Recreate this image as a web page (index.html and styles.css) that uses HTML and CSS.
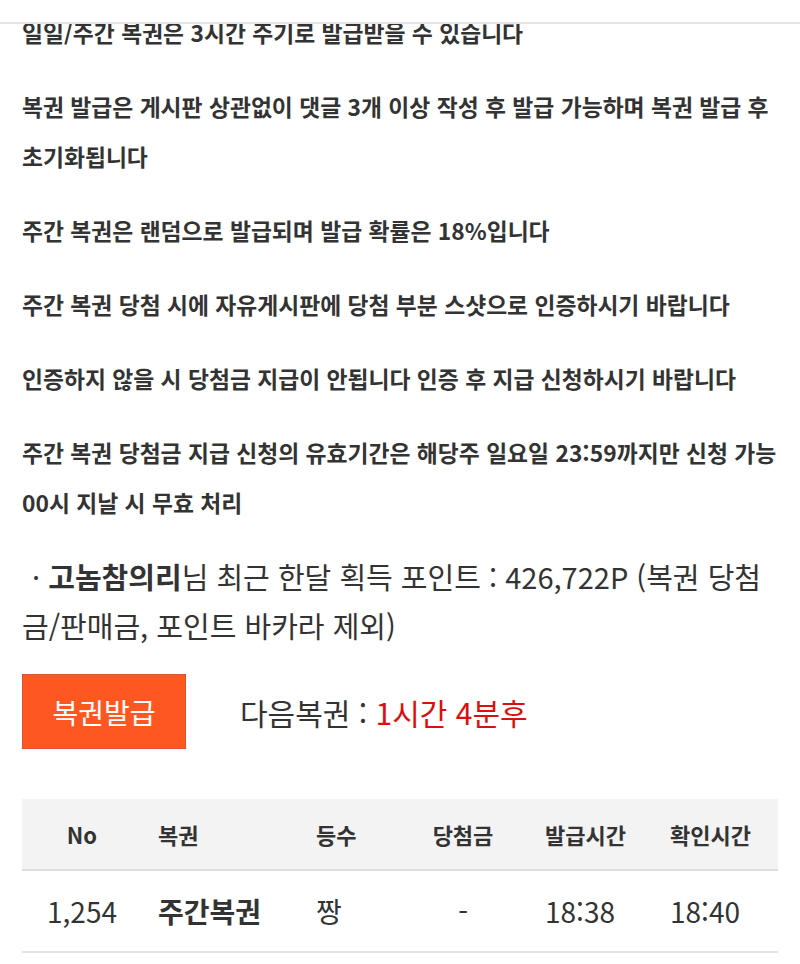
FILE: index.html
```html
<!DOCTYPE html>
<html lang="ko">
<head>
<meta charset="utf-8">
<link rel="stylesheet" href="styles.css">
</head>
<body>
<div class="topbar"></div>
<main class="content">
  <section class="rules">
    <p>일일/주간 복권은 3시간 주기로 발급받을 수 있습니다</p>
    <p>복권 발급은 게시판 상관없이 댓글 3개 이상 작성 후 발급 가능하며 복권 발급 후 초기화됩니다</p>
    <p>주간 복권은 랜덤으로 발급되며 발급 확률은 18%입니다</p>
    <p>주간 복권 당첨 시에 자유게시판에 당첨 부분 스샷으로 인증하시기 바랍니다</p>
    <p>인증하지 않을 시 당첨금 지급이 안됩니다 인증 후 지급 신청하시기 바랍니다</p>
    <p>주간 복권 당첨금 지급 신청의 유효기간은 해당주 일요일 23:59까지만 신청 가능 00시 지날 시 무효 처리</p>
  </section>
  <p class="points">· <b>고놈참의리</b>님 최근 한달 획득 포인트 : 426,722P (복권 당첨금/판매금, 포인트 바카라 제외)</p>
  <div class="issue-row">
    <button class="issue-btn">복권발급</button>
    <span class="next">다음복권 : <span class="remain">1시간 4분후</span></span>
  </div>
  <table class="tickets">
    <colgroup>
      <col class="c1"><col class="c2"><col class="c3"><col class="c4"><col class="c5"><col class="c6">
    </colgroup>
    <thead>
      <tr><th class="center">No</th><th>복권</th><th>등수</th><th class="center">당첨금</th><th>발급시간</th><th>확인시간</th></tr>
    </thead>
    <tbody>
      <tr><td class="center">1,254</td><td class="strong">주간복권</td><td>짱</td><td class="center">-</td><td>18:38</td><td>18:40</td></tr>
    </tbody>
  </table>
</main>
</body>
</html>
```
FILE: styles.css
```css
html, body {
  margin: 0;
  padding: 0;
  background: #fff;
}
body {
  font-family: "Noto Sans CJK KR", "Noto Sans", sans-serif;
  color: #333;
}
.topbar {
  position: fixed;
  top: 0;
  left: 0;
  right: 0;
  height: 22px;
  background: #fff;
  border-bottom: 2px solid #e6e6e6;
  z-index: 10;
}
.content {
  padding: 8px 8px 0 22px;
}
.rules p {
  margin: 0 0 24px 0;
  font-size: 22.8px;
  font-weight: bold;
  line-height: 50px;
  color: #333;
}
.points {
  margin: 22px 14px 0 0;
  font-size: 29px;
  line-height: 49px;
  text-indent: 10px;
  color: #333;
}
.points b {
  font-weight: bold;
}
.issue-row {
  display: flex;
  align-items: center;
  margin-top: 24px;
  gap: 54px;
}
.issue-btn {
  width: 164px;
  height: 75px;
  background: #ff5722;
  border: 1px solid #d9532c;
  color: #fff;
  font-family: inherit;
  font-size: 28px;
  padding: 0;
}
.next {
  font-size: 30px;
  color: #333;
}
.remain {
  color: #d81010;
}
.tickets {
  margin-top: 50px;
  width: 756px;
  border-collapse: collapse;
  table-layout: fixed;
}
.c1 { width: 120px; }
.c2 { width: 158px; }
.c3 { width: 100px; }
.c4 { width: 126px; }
.c5 { width: 128px; }
.c6 { width: 124px; }
.tickets th {
  background: #f3f3f3;
  height: 70px;
  padding: 0 0 0 16px;
  font-size: 22px;
  font-weight: bold;
  text-align: left;
  border-bottom: 2px solid #dedede;
  color: #333;
}
.tickets td {
  height: 80px;
  padding: 0 0 0 16px;
  font-size: 28px;
  text-align: left;
  border-bottom: 2px solid #e3e3e3;
  color: #333;
}
.tickets th:nth-child(5), .tickets td:nth-child(5) {
  padding-left: 19px;
}
.tickets .center {
  text-align: center;
  padding-left: 0;
}
.tickets .strong {
  font-weight: bold;
}
```
